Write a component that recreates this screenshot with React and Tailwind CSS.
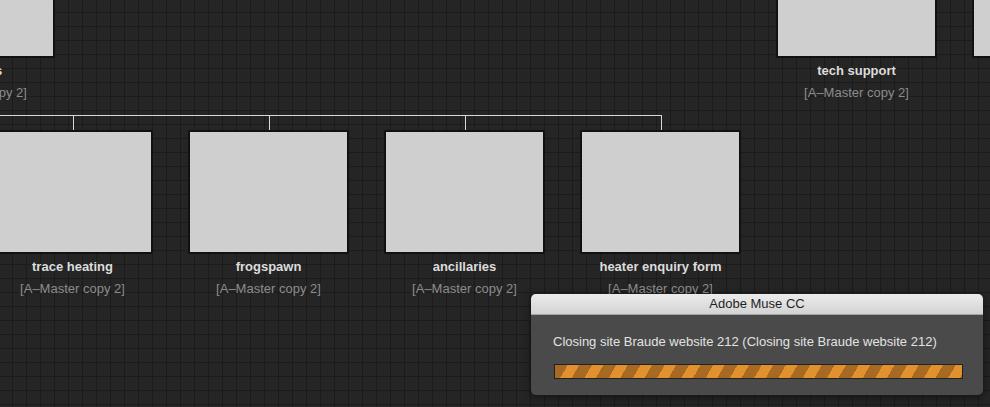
import React from 'react';

const font = { fontFamily: '"Liberation Sans", Arial, sans-serif' };

// one sitemap node: thumbnail + page name + master name
const PageNode = ({ name, master = '[A–Master copy 2]', thumb = 'h-[124px] border-t-2' }) => (
    <div className="flex flex-col items-center w-[161px]">
        <div className={`w-[161px] ${thumb} bg-[#cfcfcf] border-x-2 border-b-2 border-[#111] rounded-[2px]`} />
        {name && (
            <>
                <div className="mt-[5px] text-[13px] leading-[15px] font-bold text-[#dcdcdc] whitespace-nowrap">{name}</div>
                <div className="mt-[7px] text-[13px] leading-[15px] text-[#8c8c8c] whitespace-nowrap">{master}</div>
            </>
        )}
    </div>
);

export default function App() {
    const children = ['trace heating', 'frogspawn', 'ancillaries', 'heater enquiry form'];

    return (
        <div
            style={font}
            className="relative w-[990px] h-[407px] overflow-hidden bg-[#252525] bg-[linear-gradient(to_right,#1b1b1b_1px,transparent_1px),linear-gradient(to_bottom,#1b1b1b_1px,transparent_1px)] bg-size-[14px_14px] bg-position-[12px_12px]"
        >
            {/* top row nodes */}
            <div className="absolute left-[-106px] top-[-1px] flex gap-[35px]">
                <PageNode name="products" thumb="h-[59px]" />
            </div>
            <div className="absolute left-[776px] top-[-1px] flex gap-[35px]">
                <PageNode name="tech support" thumb="h-[59px]" />
                <PageNode thumb="h-[59px]" />
            </div>

            {/* connector lines */}
            <div className="absolute left-0 top-[115px] w-[662px] h-px bg-[#d8d8d8]" />
            {[73, 269, 465, 661].map((x) => (
                <div key={x} className="absolute top-[115px] w-px h-[16px] bg-[#d8d8d8]" style={{ left: x }} />
            ))}

            {/* child nodes */}
            <div className="absolute left-[-8px] top-[130px] flex gap-[35px]">
                {children.map((c) => (
                    <PageNode key={c} name={c} />
                ))}
            </div>

            {/* progress dialog */}
            <div className="absolute left-[531px] top-[294px] w-[452px] h-[101px] rounded-[5px] overflow-hidden bg-[#4a4a4a] shadow-[0_2px_8px_rgba(0,0,0,0.5)]">
                <div className="h-[21px] bg-[linear-gradient(to_bottom,#ececec,#d3d3d3)] border-b border-[#a5a5a5] flex items-center justify-center text-[13px] text-[#1e1e1e]">
                    Adobe Muse CC
                </div>
                <div className="px-[22px] pt-[19px]">
                    <div className="text-[13px] leading-[16px] text-[#e2e2e2] whitespace-nowrap">
                        Closing site Braude website 212 (Closing site Braude website 212)
                    </div>
                    <div className="mt-[14px] ml-px w-[409px] h-[15px] border border-[#222] bg-[repeating-linear-gradient(120deg,#a86a22_0px,#a86a22_11px,#e1922e_11px,#e1922e_21px)]" />
                </div>
            </div>
        </div>
    );
}
